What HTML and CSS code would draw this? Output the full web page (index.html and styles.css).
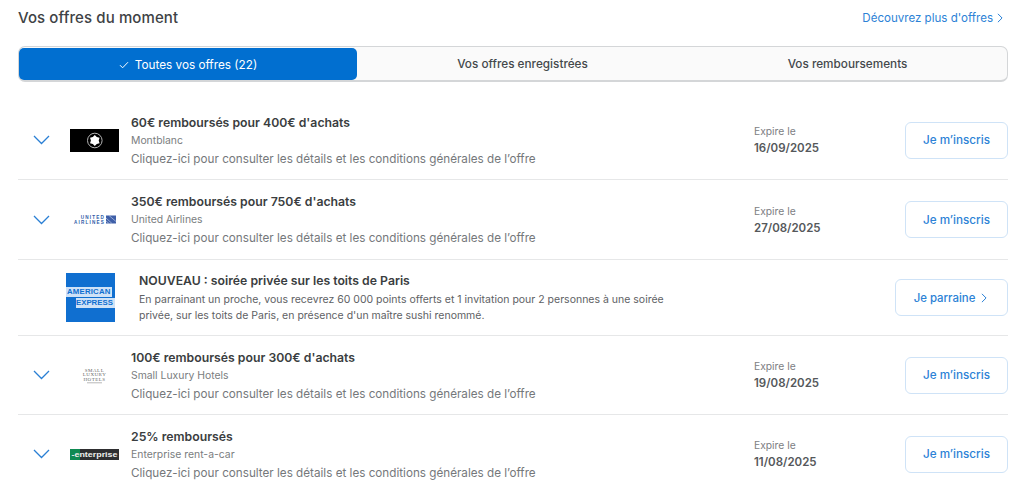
FILE: index.html
```html
<!DOCTYPE html>
<html lang="fr">
<head>
<meta charset="utf-8">
<title>Vos offres du moment</title>
<link rel="stylesheet" href="styles.css">
</head>
<body>
<main class="page">
  <header class="head">
    <h1 class="head-title">Vos offres du moment</h1>
    <a class="head-link">Découvrez plus d'offres
      <svg class="chev-r" viewBox="0 0 7 12" width="6" height="10"><path d="M1 1l5 5-5 5" fill="none" stroke="#2c82d6" stroke-width="1.2"/></svg>
    </a>
  </header>
  <nav class="tabs">
    <div class="tab tab-active">
      <svg class="check" viewBox="0 0 10 8" width="10" height="8"><path d="M1 4.2l2.6 2.6L9 1.2" fill="none" stroke="#fff" stroke-width="1"/></svg>
      Toutes vos offres (22)
    </div>
    <div class="tab">Vos offres enregistrées</div>
    <div class="tab">Vos remboursements</div>
  </nav>
  <section class="list">
    <article class="row row-a">
      <svg class="toggle" viewBox="0 0 17 10" width="17" height="10"><path d="M1 1l7.500 7.500L16 1" fill="none" stroke="#2a7fd4" stroke-width="1.300"/></svg>
      <div class="logo">
        <svg viewBox="0 0 49 23" width="49" height="23"><rect width="49" height="23" fill="#000"/><circle cx="24.800" cy="11.500" r="7.300" fill="none" stroke="#b5b5b5" stroke-width="1"/><polygon transform="translate(24.800 11.500)" points="0,-5.500 1.950,-3.380 4.760,-2.750 3.900,0 4.760,2.750 1.950,3.380 0,5.500 -1.950,3.380 -4.760,2.750 -3.900,0 -4.760,-2.750 -1.950,-3.380" fill="#fff"/></svg>
      </div>
      <div class="info">
        <h2 class="offer">60€ remboursés pour 400€ d'achats</h2>
        <p class="brand">Montblanc</p>
        <p class="desc">Cliquez-ici pour consulter les détails et les conditions générales de l’offre</p>
      </div>
      <div class="expire"><span class="exp-label">Expire le</span><strong class="exp-date">16/09/2025</strong></div>
      <a class="btn">Je m’inscris</a>
    </article>
    <article class="row">
      <svg class="toggle" viewBox="0 0 17 10" width="17" height="10"><path d="M1 1l7.500 7.500L16 1" fill="none" stroke="#2a7fd4" stroke-width="1.300"/></svg>
      <div class="logo">
        <svg viewBox="0 0 49 12" width="49" height="12"><text x="35" y="5" text-anchor="end" class="ua">UNITED</text><text x="35" y="9.800" text-anchor="end" class="ua">AIRLINES</text><rect x="36" y="1.500" width="10" height="8" fill="#3f5fa8"/><path d="M36 4l6 5.500M36 7l3 2.500M39 1.500l7 6" stroke="#b9c8e6" stroke-width=".7"/></svg>
      </div>
      <div class="info">
        <h2 class="offer">350€ remboursés pour 750€ d'achats</h2>
        <p class="brand">United Airlines</p>
        <p class="desc">Cliquez-ici pour consulter les détails et les conditions générales de l’offre</p>
      </div>
      <div class="expire"><span class="exp-label">Expire le</span><strong class="exp-date">27/08/2025</strong></div>
      <a class="btn">Je m’inscris</a>
    </article>
    <article class="row row-promo">
      <div class="amex">
        <span class="amex-line">AMERICAN</span>
        <span class="amex-line amex-line2">EXPRESS</span>
      </div>
      <div class="promo">
        <h2 class="offer">NOUVEAU : soirée privée sur les toits de Paris</h2>
        <p class="promo-text">En parrainant un proche, vous recevrez 60 000 points offerts et 1 invitation pour 2 personnes à une soirée privée, sur les toits de Paris, en présence d'un maître sushi renommé.</p>
      </div>
      <a class="btn btn-wide">Je parraine
        <svg class="chev-r" viewBox="0 0 7 12" width="6" height="10"><path d="M1 1l5 5-5 5" fill="none" stroke="#2c82d6" stroke-width="1.200"/></svg>
      </a>
    </article>
    <article class="row row-a">
      <svg class="toggle" viewBox="0 0 17 10" width="17" height="10"><path d="M1 1l7.500 7.500L16 1" fill="none" stroke="#2a7fd4" stroke-width="1.300"/></svg>
      <div class="logo">
        <svg viewBox="0 0 49 18" width="49" height="18"><text x="24.500" y="5.500" text-anchor="middle" class="slh">SMALL</text><text x="24.500" y="10" text-anchor="middle" class="slh">LUXURY</text><text x="24.500" y="14.500" text-anchor="middle" class="slh">HOTELS</text><path d="M17 16.800h15" stroke="#999" stroke-width=".7"/></svg>
      </div>
      <div class="info">
        <h2 class="offer">100€ remboursés pour 300€ d'achats</h2>
        <p class="brand">Small Luxury Hotels</p>
        <p class="desc">Cliquez-ici pour consulter les détails et les conditions générales de l’offre</p>
      </div>
      <div class="expire"><span class="exp-label">Expire le</span><strong class="exp-date">19/08/2025</strong></div>
      <a class="btn">Je m’inscris</a>
    </article>
    <article class="row row-last">
      <svg class="toggle" viewBox="0 0 17 10" width="17" height="10"><path d="M1 1l7.500 7.500L16 1" fill="none" stroke="#2a7fd4" stroke-width="1.300"/></svg>
      <div class="logo">
        <svg viewBox="0 0 49 11" width="49" height="11"><rect width="49" height="11" fill="#2e2e30"/><rect width="10" height="11" fill="#0f8a52"/><text x="1.500" y="7.500" class="ent" textLength="46" lengthAdjust="spacingAndGlyphs">-enterprise</text></svg>
      </div>
      <div class="info">
        <h2 class="offer">25% remboursés</h2>
        <p class="brand">Enterprise rent-a-car</p>
        <p class="desc">Cliquez-ici pour consulter les détails et les conditions générales de l’offre</p>
      </div>
      <div class="expire"><span class="exp-label">Expire le</span><strong class="exp-date">11/08/2025</strong></div>
      <a class="btn">Je m’inscris</a>
    </article>
  </section>
</main>
</body>
</html>
```
FILE: styles.css
```css
* { box-sizing: border-box; }
html, body { margin: 0; height: 490px; overflow: hidden; background: #fff; }
body { font-family: Inter, "Liberation Sans", sans-serif; color: #3a3d40; }
h1, h2, p { margin: 0; font-weight: normal; }
.page { padding: 0 16px 0 18px; }
.head { display: flex; justify-content: space-between; align-items: center; height: 35px; }
.head-title { font-size: 15px; color: #3e4245; font-weight: 500; letter-spacing: .1px; }
.head-link { font-size: 11.550px; color: #2c82d6; display: flex; align-items: center; gap: 4px; margin-right: 5px; }
.tabs { display: flex; margin-top: 11px; height: 36px; border: 1px solid #d4d6d8; border-bottom-width: 2px; border-radius: 7px; background: #fafafa; }
.tab { flex: 1; display: flex; align-items: center; justify-content: center; font-size: 11.750px; font-weight: 500; color: #44484b; padding: 1px 0 0 6px; }
.tab-active { flex: 0 0 338px; background: #016fd0; color: #fff; border-radius: 5px; gap: 6px; font-weight: 400; margin: 1px 0 0; padding: 1px 0 0; }
.check { flex: none; }
.list { margin-top: 19px; }
.row { display: flex; align-items: center; height: 80px; border-bottom: 1px solid #e6e7e8; }
.row-a { height: 79px; }
.row-promo { height: 76px; }
.row-last { height: 78px; border-bottom: 0; }
.row-a .info, .row-last .info { padding-top: 1px; }
.toggle { flex: none; margin-left: 15px; }
.logo { flex: none; width: 49px; margin-left: 20px; }
.logo svg { display: block; }
.info { flex: 1; margin-left: 12px; min-width: 0; }
.offer { font-size: 12.250px; line-height: 18px; font-weight: 600; color: #3a3d40; }
.brand { font-size: 10.400px; line-height: 18px; color: #7a7d80; }
.desc { font-size: 11.700px; line-height: 18px; color: #75787b; }
.expire { flex: none; width: 151px; display: flex; flex-direction: column; font-size: 10.300px; line-height: 17px; }
.exp-label { color: #7d8083; }
.exp-date { color: #55585b; font-weight: 600; font-size: 11.500px; }
.btn { flex: none; width: 103px; height: 37px; display: flex; align-items: center; justify-content: center; gap: 5px; border: 1px solid #cfe3f7; border-radius: 6px; color: #2c82d6; font-size: 11.700px; font-weight: 500; }
.btn-wide { width: 113px; font-size: 11.400px; gap: 6px; padding-right: 2px; }
.amex { flex: none; width: 49px; height: 49px; margin-left: 48px; background: #106fd0; display: flex; flex-direction: column; justify-content: center; gap: 1px; font-family: "Liberation Sans", sans-serif; font-size: 7.800px; font-weight: 700; line-height: 10px; }
.amex-line { display: block; width: 46px; background: #cfe2f7; color: #106fd0; padding-left: 1px; white-space: nowrap; letter-spacing: .2px; }
.amex-line2 { width: 39px; margin-left: 10px; letter-spacing: 0; padding-left: 0; }
.promo { flex: 1; margin-left: 24px; max-width: 560px; }
.row-promo .btn { margin-left: auto; }
.promo-text { font-size: 10.500px; line-height: 16px; color: #5e6164; margin-top: 2px; }
.ua { font: 700 4.600px "Liberation Sans", sans-serif; letter-spacing: 1.200px; fill: #2f5ba8; }
.slh { font: 400 5px "Liberation Serif", serif; letter-spacing: .5px; fill: #666; }
.ent { font: 700 8px "Liberation Sans", sans-serif; fill: #eee; }
```
